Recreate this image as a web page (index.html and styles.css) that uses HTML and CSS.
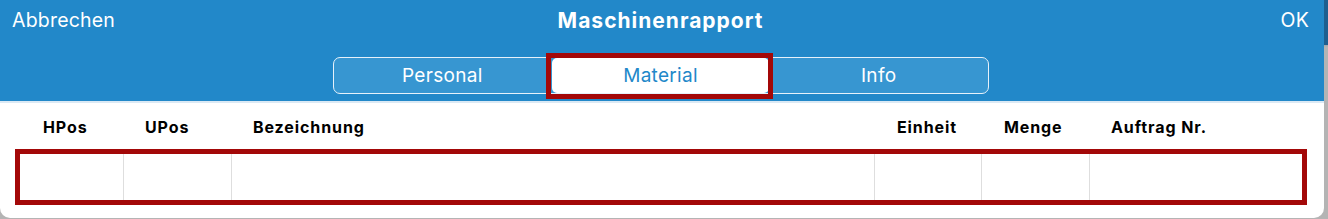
FILE: index.html
```html
<!DOCTYPE html>
<html lang="de">
<head>
<meta charset="utf-8">
<title>Maschinenrapport</title>
<link rel="stylesheet" href="styles.css">
</head>
<body>
<div class="panel">
  <header class="nav">
    <div class="nav-top">
      <span class="nav-btn left">Abbrechen</span>
      <span class="nav-title">Maschinenrapport</span>
      <span class="nav-btn right">OK</span>
    </div>
    <div class="seg-row">
      <div class="seg">
        <div class="seg-item">Personal</div>
        <div class="seg-item active"><span class="seg-pill">Material</span></div>
        <div class="seg-item">Info</div>
      </div>
    </div>
  </header>
  <div class="table">
    <div class="thead">
      <div class="c c1">HPos</div>
      <div class="c c2">UPos</div>
      <div class="c c3">Bezeichnung</div>
      <div class="c c4">Einheit</div>
      <div class="c c5">Menge</div>
      <div class="c c6">Auftrag Nr.</div>
    </div>
    <div class="trow">
      <div class="cell c1"></div>
      <div class="cell c2"></div>
      <div class="cell c3"></div>
      <div class="cell c4"></div>
      <div class="cell c5"></div>
      <div class="cell c6"></div>
    </div>
  </div>
</div>
<div class="edge"></div>
</body>
</html>
```
FILE: styles.css
```css
html, body {
  margin: 0;
  padding: 0;
}
body {
  width: 1328px;
  height: 219px;
  overflow: hidden;
  display: flex;
  background: #b4b4b4;
  font-family: "Inter", "Liberation Sans", sans-serif;
}
.panel {
  width: 1324px;
  height: 218px;
  background: #fff;
  border-radius: 0 0 10px 10px;
  overflow: hidden;
}
.edge {
  width: 4px;
  height: 219px;
  background: linear-gradient(#1d5f90 0, #1d5f90 45px, #9aa4ab 45px, #b4b4b4 47px, #b4b4b4 100%);
}
.nav {
  background: #2288c9;
  height: 101px;
  border-bottom: 2px solid #dbe9f4;
}
.nav-top {
  height: 40px;
  display: flex;
  align-items: center;
  justify-content: space-between;
  color: #fff;
  padding: 0 15px 0 12px;
}
.nav-btn {
  font-size: 19.5px;
  letter-spacing: 0.2px;
  width: 140px;
}
.nav-btn.right {
  text-align: right;
}
.nav-title {
  font-size: 21px;
  font-weight: 700;
  letter-spacing: 1px;
}
.seg-row {
  display: flex;
  justify-content: center;
  padding-top: 17px;
  padding-right: 3px;
}
.seg {
  display: flex;
  width: 654px;
  height: 35px;
  border: 1.5px solid #e6f1fa;
  border-radius: 7px;
  background: #3796d1;
}
.seg-item {
  flex: 1;
  display: flex;
  align-items: center;
  justify-content: center;
  color: #fff;
  font-size: 19px;
  letter-spacing: 0.3px;
}
.seg-item.active {
  position: relative;
  padding: 0 1px 0 0;
}
.seg-pill {
  flex: 1;
  align-self: stretch;
  display: flex;
  align-items: center;
  justify-content: center;
  background: #fff;
  color: #2288c9;
  border-radius: 5px;
  margin: 0 0 0 1px;
}
.seg-item.active::after {
  content: "";
  position: absolute;
  top: -5px;
  bottom: -6px;
  left: -5px;
  right: -3px;
  border: 5px solid #a30808;
}
.table {
  padding: 0 22px 0 20px;
}
.thead, .trow {
  display: flex;
}
.thead {
  height: 51px;
  align-items: center;
  padding-bottom: 3px;
  box-sizing: border-box;
}
.c {
  font-size: 16px;
  font-weight: 700;
  color: #000;
  padding-left: 22px;
  letter-spacing: 0.9px;
  box-sizing: border-box;
}
.thead .c1 { padding-left: 23px; }
.c1 { width: 103px; }
.c2 { width: 108px; }
.c3 { width: 644px; }
.c4 { width: 107px; }
.c5 { width: 107px; }
.c6 { width: 213px; }
.trow {
  height: 46px;
  outline: 5px solid #a30808;
}
.cell {
  border-left: 1px solid #dedede;
  padding: 0;
}
.cell.c1 { border-left: none; }
```
